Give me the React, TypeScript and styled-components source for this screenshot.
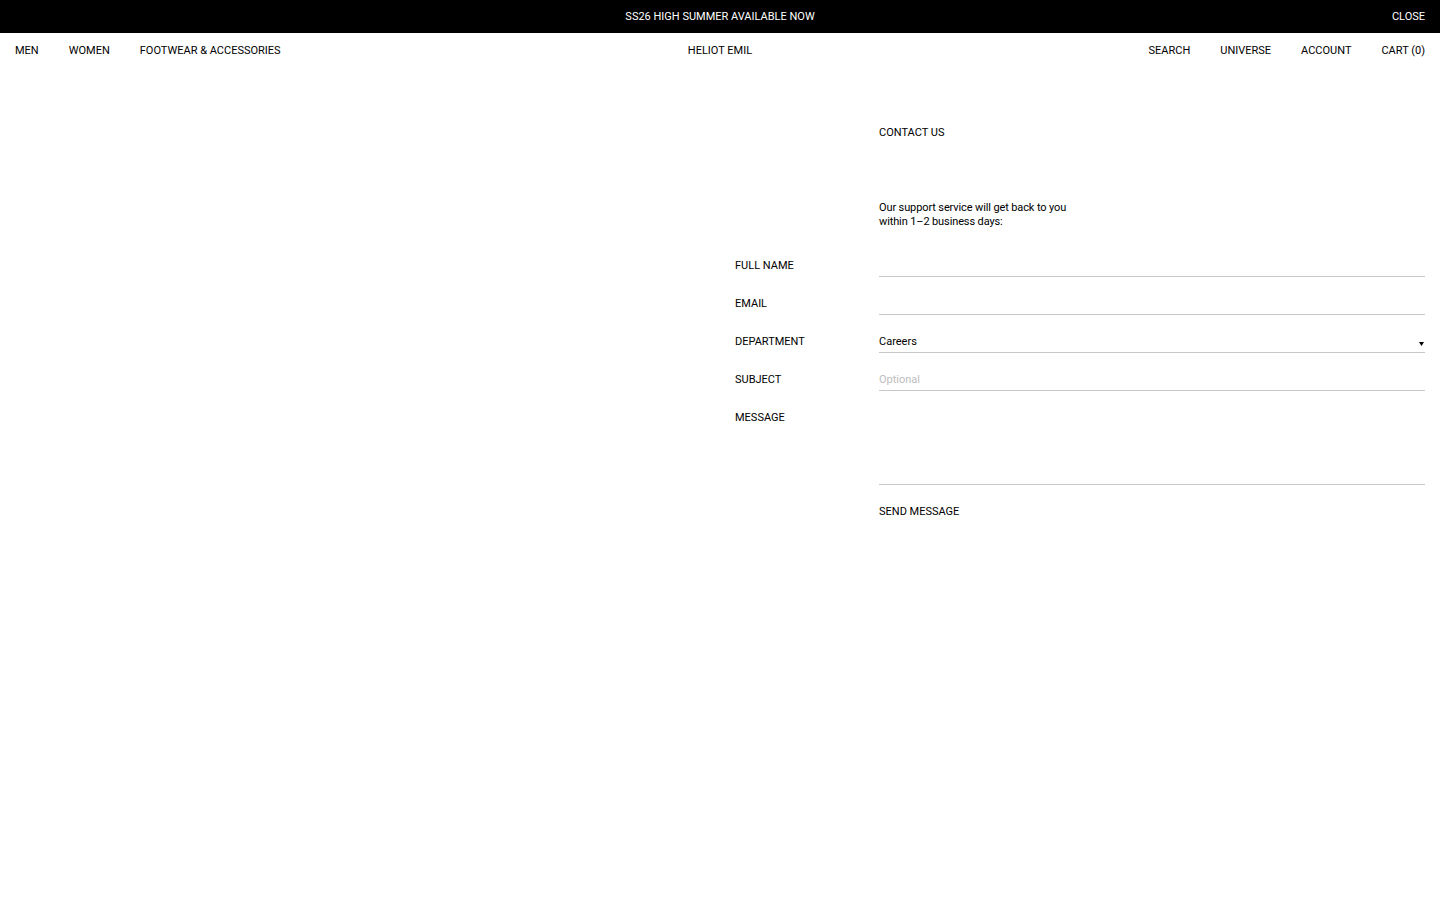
import React, { useState } from "react"
import styled, { createGlobalStyle } from "styled-components"

const GlobalStyle = createGlobalStyle`
html, body {
  margin: 0;
  padding: 0;
  background: #fff;
}
body {
  font-family: Roboto, "Liberation Sans", Arial, sans-serif;
  font-size: 11px;
  color: #000;
  -webkit-font-smoothing: antialiased;
}
* {
  box-sizing: border-box;
}
`;

const Announcement = styled.div`
  height: 33px;
  background: #000;
  color: #fff;
  display: flex;
  align-items: center;
  justify-content: center;
  position: relative;
  text-transform: uppercase;
`;

const CloseButton = styled.button`
  position: absolute;
  right: 15px;
  top: 0;
  height: 33px;
  background: none;
  border: 0;
  padding: 0;
  color: #fff;
  font: inherit;
  cursor: pointer;
`;

const Header = styled.header`
  height: 34px;
  display: grid;
  grid-template-columns: 1fr auto 1fr;
  align-items: center;
  padding: 0 15px;
`;

const NavGroup = styled.nav<{ $end?: boolean }>`
  display: flex;
  gap: 30px;
  justify-content: ${p => (p.$end ? "flex-end" : "flex-start")};
`;

const NavLink = styled.a`
  color: #000;
  text-decoration: none;
  cursor: pointer;
  text-transform: uppercase;
`;

const Logo = styled.a`
  color: #000;
  text-decoration: none;
`;

const Main = styled.main`
  display: grid;
  grid-template-columns: repeat(10, 1fr);
  padding-top: 58px;
  row-gap: 14px;
`;

const Cell = styled.div<{ $from: number; $to: number }>`
  grid-column: ${p => p.$from} / ${p => p.$to};
  padding: 0 15px;
`;

const Title = styled.h1`
  margin: 0 0 61px;
  padding-top: 1px;
  font-size: 11px;
  font-weight: 400;
  line-height: 14px;
`;

const Intro = styled.p`
  margin: 0 0 10px;
  line-height: 14px;
  letter-spacing: -0.12px;
`;

const Label = styled.label`
  display: block;
  padding-top: 2px;
  line-height: 22px;
  text-transform: uppercase;
`;

const TextInput = styled.input`
  display: block;
  width: 100%;
  height: 24px;
  border: 0;
  border-bottom: 1px solid #c8c8c8;
  border-radius: 0;
  padding: 2px 0 0;
  font: inherit;
  color: #000;
  background: transparent;
  outline: none;
  &::placeholder {
    color: #bdbdbd;
  }
`;

const SelectWrap = styled.div`
  position: relative;
`;

const Select = styled.select`
  display: block;
  width: 100%;
  height: 24px;
  border: 0;
  border-bottom: 1px solid #c8c8c8;
  border-radius: 0;
  padding: 2px 0 0;
  font: inherit;
  color: #000;
  background: transparent;
  appearance: none;
  outline: none;
`;

const Caret = styled.svg`
  position: absolute;
  right: 1px;
  top: 13px;
  pointer-events: none;
`;

const TextArea = styled.textarea`
  display: block;
  width: 100%;
  height: 80px;
  border: 0;
  border-bottom: 1px solid #c8c8c8;
  border-radius: 0;
  padding: 6px 0 0;
  font: inherit;
  resize: none;
  background: transparent;
  outline: none;
`;

const SendButton = styled.button`
  background: none;
  border: 0;
  padding: 2px 0 0;
  font: inherit;
  line-height: 22px;
  color: #000;
  text-transform: uppercase;
  cursor: pointer;
`;

const departments = ["Careers", "Customer Service", "Press", "Wholesale"];

const Field = ({ label, children }: { label: string; children: React.ReactNode }) => (
  <>
    <Cell $from={6} $to={7}>
      <Label>{label}</Label>
    </Cell>
    <Cell $from={7} $to={11}>{children}</Cell>
  </>
);

const App = () => {
  const [dept, setDept] = useState("Careers");
  return (
    <>
      <GlobalStyle />
      <Announcement>
        SS26 High Summer Available Now
        <CloseButton>CLOSE</CloseButton>
      </Announcement>
      <Header>
        <NavGroup>
          <NavLink>Men</NavLink>
          <NavLink>Women</NavLink>
          <NavLink>Footwear &amp; Accessories</NavLink>
        </NavGroup>
        <Logo>HELIOT EMIL</Logo>
        <NavGroup $end>
          <NavLink>Search</NavLink>
          <NavLink>Universe</NavLink>
          <NavLink>Account</NavLink>
          <NavLink>Cart (0)</NavLink>
        </NavGroup>
      </Header>
      <Main>
        <Cell $from={7} $to={11}>
          <Title>CONTACT US</Title>
          <Intro>
            Our support service will get back to you
            <br />
            within 1–2 business days:
          </Intro>
        </Cell>
        <Field label="Full name">
          <TextInput type="text" />
        </Field>
        <Field label="Email">
          <TextInput type="email" />
        </Field>
        <Field label="Department">
          <SelectWrap>
            <Select value={dept} onChange={e => setDept(e.target.value)}>
              {departments.map(d => (
                <option key={d}>{d}</option>
              ))}
            </Select>
            <Caret width="5" height="4" viewBox="0 0 5 4">
              <path d="M0 0H5L2.5 4Z" fill="#000" />
            </Caret>
          </SelectWrap>
        </Field>
        <Field label="Subject">
          <TextInput type="text" placeholder="Optional" />
        </Field>
        <Field label="Message">
          <TextArea />
        </Field>
        <Cell $from={7} $to={11}>
          <SendButton>Send message</SendButton>
        </Cell>
      </Main>
    </>
  )
}

export default App;
